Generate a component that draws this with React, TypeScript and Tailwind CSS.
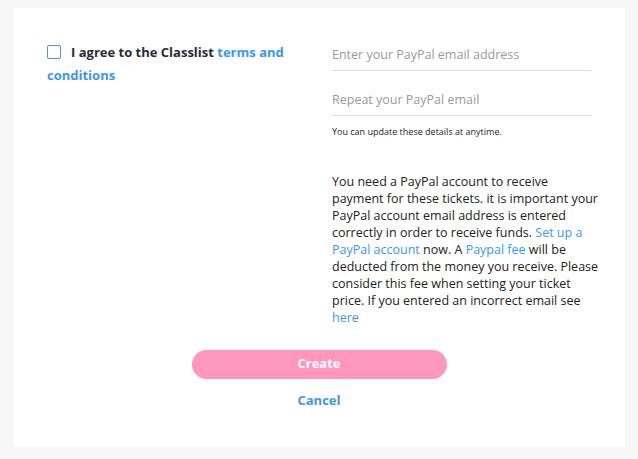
/**
 * PayPal payout setup form — terms checkbox + PayPal email fields
 */
import React, { useState } from "react";

const App: React.FC = () => {
  const [agreed, setAgreed] = useState(false);

  return (
    <div className="min-h-[459px] bg-[#f7f7f7] pt-2 pl-[13px] pr-[13px] pb-3 font-['Open_Sans',sans-serif]">
      <div className="bg-white w-[612px] h-[439px] pt-[30px]">
        <div className="flex">
          {/* Terms */}
          <div className="w-[285px] pl-[34px] pt-[3px]">
            <label className="block text-[13px] leading-[23px] font-bold text-[#2a2a3a]">
              <input
                type="checkbox"
                checked={agreed}
                onChange={(e) => setAgreed(e.target.checked)}
                className="appearance-none w-[14px] h-[14px] border border-[#4a90e2] rounded-[2px] align-[-2px] mr-[10px]"
              />
              I agree to the Classlist{" "}
              <a href="#" className="text-[#3a97ee]">
                terms and conditions
              </a>
            </label>
          </div>

          {/* PayPal details */}
          <div className="w-[280px] ml-[34px]">
            <input
              placeholder="Enter your PayPal email address"
              className="w-[259px] h-[33px] border-b border-[#dcdcdc] text-[12.5px] text-[#333] placeholder:text-[#9a9a9a] outline-none"
            />
            <input
              placeholder="Repeat your PayPal email"
              className="w-[259px] h-[33px] mt-[12px] border-b border-[#dcdcdc] text-[12.5px] text-[#333] placeholder:text-[#9a9a9a] outline-none"
            />
            <p className="text-[9px] text-[#222] mt-[9px]">You can update these details at anytime.</p>

            <p className="text-[12.5px] leading-[17px] text-[#222] mt-[34px] whitespace-nowrap">
              You need a PayPal account to receive
              <br />
              payment for these tickets. it is important your
              <br />
              PayPal account email address is entered
              <br />
              correctly in order to receive funds.{" "}
              <a href="#" className="text-[#3a97ee]">
                Set up a
                <br />
                PayPal account
              </a>{" "}
              now. A <a href="#" className="text-[#3a97ee]">Paypal fee</a> will be
              <br />
              deducted from the money you receive. Please
              <br />
              consider this fee when setting your ticket
              <br />
              price. If you entered an incorrect email see
              <br />
              <a href="#" className="text-[#3a97ee]">here</a>
            </p>
          </div>
        </div>

        {/* Actions */}
        <div className="flex flex-col items-center mt-[24px]">
          <button className="w-[255px] h-[29px] rounded-full bg-[#ff96bb] text-white text-[13px] font-bold">
            Create
          </button>
          <a href="#" className="mt-[12px] text-[13px] font-bold text-[#3a97ee]">
            Cancel
          </a>
        </div>
      </div>
    </div>
  );
};

export default App;
